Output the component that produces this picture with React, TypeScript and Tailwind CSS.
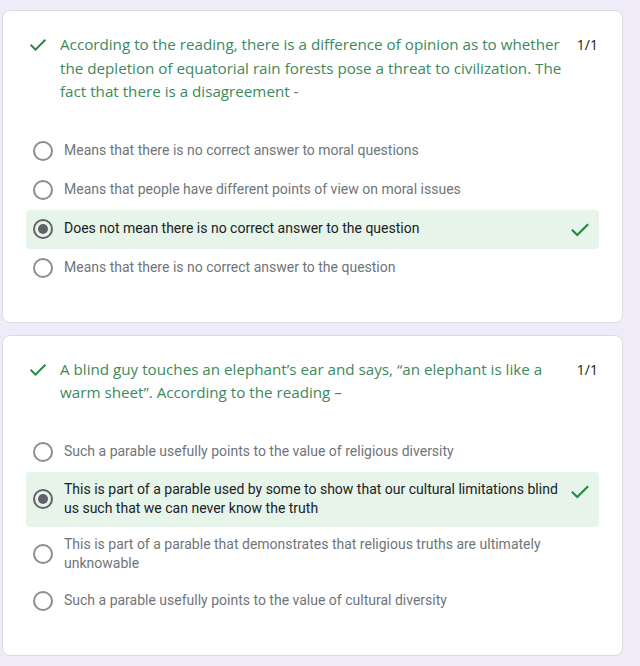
import React from "react";

const Check = ({ className = "" }: { className?: string }) => (
  <svg viewBox="0 0 24 24" className={className} fill="none" stroke="currentColor" strokeWidth="2.4" strokeLinecap="square">
    <path d="M4 12.5l5 5L20 6.5" />
  </svg>
);

type Opt = { text: string; selected?: boolean };

const Radio = ({ selected }: { selected?: boolean }) =>
  selected ? (
    <div className="w-[20px] h-[20px] shrink-0 rounded-full border-2 border-[#5f6368] flex items-center justify-center">
      <div className="w-[10px] h-[10px] rounded-full bg-[#5f6368]" />
    </div>
  ) : (
    <div className="w-[20px] h-[20px] shrink-0 rounded-full border-2 border-[#8a8d91]" />
  );

const Option = ({ o }: { o: Opt }) => (
  <div
    className={`flex items-center min-h-[39px] py-[8px] pl-[7px] pr-[8px] rounded-[4px] ${
      o.selected ? "bg-[#e6f4ea]" : ""
    }`}
  >
    <Radio selected={o.selected} />
    <div
      className={`ml-[11px] flex-1 text-[14px] leading-[19.5px] ${
        o.selected ? "text-[#202124]" : "text-[#70757a]"
      }`}
      style={{ fontFamily: "Roboto, 'Liberation Sans', sans-serif" }}
    >
      {o.text}
    </div>
    {o.selected && <Check className="w-[22px] h-[22px] text-[#1e8e3e] ml-[8px] self-start mt-[1px]" />}
  </div>
);

const Card = ({ title, options, pt }: { title: string[]; options: Opt[]; pt: string }) => (
  <div className={`bg-white rounded-[8px] border border-[#dadce0] w-[621px] px-[23px] pb-[34px] ${pt}`}>
    <div className="flex items-start">
      <Check className="w-[20px] h-[20px] text-[#1e8e3e] mt-[2px] ml-[2px] shrink-0" />
      <div
        className="ml-[12px] flex-1 text-[15.2px] leading-[23.5px] text-[#3c8a5c]"
        style={{ fontFamily: "'Open Sans', sans-serif" }}
      >
        {title.map((t, i) => (
          <div key={i} className="whitespace-nowrap">{t}</div>
        ))}
      </div>
      <div
        className="text-[14px] leading-[23.5px] text-[#202124] ml-[8px] mr-[1px]"
        style={{ fontFamily: "'Open Sans', sans-serif" }}
      >
        1/1
      </div>
    </div>
    <div className="mt-[28px] flex flex-col">
      {options.map((o, i) => (
        <Option key={i} o={o} />
      ))}
    </div>
  </div>
);

export default function App() {
  return (
    <div className="min-h-[666px] w-[640px] bg-[#f0ebf8] pt-[10px] pl-[2px] flex flex-col gap-[12px]">
      <Card
        pt="pt-[22px]"
        title={[
          "According to the reading, there is a difference of opinion as to whether",
          "the depletion of equatorial rain forests pose a threat to civilization. The",
          "fact that there is a disagreement -",
        ]}
        options={[
          { text: "Means that there is no correct answer to moral questions" },
          { text: "Means that people have different points of view on moral issues" },
          { text: "Does not mean there is no correct answer to the question", selected: true },
          { text: "Means that there is no correct answer to the question" },
        ]}
      />
      <Card
        pt="pt-[22px]"
        title={[
          "A blind guy touches an elephant\u2019s ear and says, \u201can elephant is like a",
          "warm sheet\u201d. According to the reading \u2013",
        ]}
        options={[
          { text: "Such a parable usefully points to the value of religious diversity" },
          {
            text: "This is part of a parable used by some to show that our cultural limitations blind us such that we can never know the truth",
            selected: true,
          },
          { text: "This is part of a parable that demonstrates that religious truths are ultimately unknowable" },
          { text: "Such a parable usefully points to the value of cultural diversity" },
        ]}
      />
    </div>
  );
}
